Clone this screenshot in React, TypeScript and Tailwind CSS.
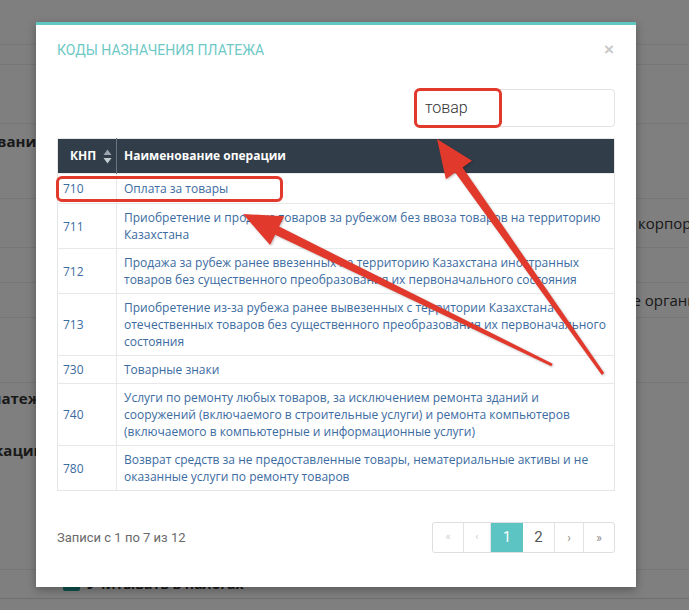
import React from "react";

type Row = { code: string; lines: string[] };

const rows: Row[] = [
  { code: "710", lines: ["Оплата за товары"] },
  {
    code: "711",
    lines: [
      "Приобретение и продажа товаров за рубежом без ввоза товаров на территорию",
      "Казахстана",
    ],
  },
  {
    code: "712",
    lines: [
      "Продажа за рубеж ранее ввезенных на территорию Казахстана иностранных",
      "товаров без существенного преобразования их первоначального состояния",
    ],
  },
  {
    code: "713",
    lines: [
      "Приобретение из-за рубежа ранее вывезенных с территории Казахстана",
      "отечественных товаров без существенного преобразования их первоначального",
      "состояния",
    ],
  },
  { code: "730", lines: ["Товарные знаки"] },
  {
    code: "740",
    lines: [
      "Услуги по ремонту любых товаров, за исключением ремонта зданий и",
      "сооружений (включаемого в строительные услуги) и ремонта компьютеров",
      "(включаемого в компьютерные и информационные услуги)",
    ],
  },
  {
    code: "780",
    lines: [
      "Возврат средств за не предоставленные товары, нематериальные активы и не",
      "оказанные услуги по ремонту товаров",
    ],
  },
];

// arrow polygon from tail to tip, tapering shaft + head
function arrowPoints(
  tail: [number, number],
  tip: [number, number],
  tailW: number,
  shaftW: number,
  headW: number,
  headLen: number
) {
  const dx = tip[0] - tail[0];
  const dy = tip[1] - tail[1];
  const len = Math.hypot(dx, dy);
  const ux = dx / len;
  const uy = dy / len;
  const nx = -uy;
  const ny = ux;
  const bx = tip[0] - ux * headLen;
  const by = tip[1] - uy * headLen;
  const p = (x: number, y: number) => `${x.toFixed(1)},${y.toFixed(1)}`;
  return [
    p(tail[0] + (nx * tailW) / 2, tail[1] + (ny * tailW) / 2),
    p(bx + (nx * shaftW) / 2, by + (ny * shaftW) / 2),
    p(bx + (nx * headW) / 2, by + (ny * headW) / 2),
    p(tip[0], tip[1]),
    p(bx - (nx * headW) / 2, by - (ny * headW) / 2),
    p(bx - (nx * shaftW) / 2, by - (ny * shaftW) / 2),
    p(tail[0] - (nx * tailW) / 2, tail[1] - (ny * tailW) / 2),
  ].join(" ");
}

function SortIcon() {
  return (
    <svg width="9" height="15" viewBox="0 0 9 15" className="ml-[7px]">
      <path d="M4.5 0.5 L8.5 6 L0.5 6 Z" fill="#9aa5b0" />
      <path d="M4.5 14.5 L8.5 9 L0.5 9 Z" fill="#c3cbd3" />
    </svg>
  );
}

function PageBehind() {
  return (
    <div className="flex flex-col font-['Open_Sans',sans-serif] text-[15px] text-[#333]">
      <div className="h-[45px] border-b border-[#eee]" />
      <div className="h-[20px] border-b border-[#eee]" />
      <div className="h-[59px] border-b border-[#eee]" />
      <div className="flex h-[35px] items-center">
        <span className="ml-[-75px] whitespace-nowrap font-bold">Наименование</span>
      </div>
      <div className="h-[40px] border-b border-[#eee]" />
      <div className="flex h-[49px] items-center border-b border-[#eee] pl-[638px]">
        <span className="whitespace-nowrap">корпоративный</span>
      </div>
      <div className="h-[35px] border-b border-[#eee]" />
      <div className="flex h-[35px] items-center border-b border-[#eee] pl-[621px]">
        <span className="whitespace-nowrap">ые организации</span>
      </div>
      <div className="h-[65px] border-b border-[#eee]" />
      <div className="flex h-[30px] items-center">
        <span className="ml-[-118px] whitespace-nowrap font-bold">Назначение платежа</span>
      </div>
      <div className="h-[22px]" />
      <div className="flex h-[30px] items-center">
        <span className="ml-[-84px] whitespace-nowrap font-bold">Классификации</span>
      </div>
      <div className="h-[105px] border-b border-[#eee]" />
      <div className="flex h-[26px] items-center gap-[7px] pl-[63px]">
        <span className="h-[16px] w-[17px] rounded-[2px] bg-[#1fa39b]" />
        <span className="whitespace-nowrap text-[14px] font-bold">Учитывать в налогах</span>
      </div>
      <div className="h-[3px] border-b border-[#ddd]" />
    </div>
  );
}

export default function App() {
  return (
    <div className="relative h-[610px] w-[689px] overflow-hidden bg-white">
      <PageBehind />
      <div className="absolute inset-0 bg-black/50" />

      {/* modal */}
      <div className="absolute inset-0 pl-[36px] pt-[22px]">
        <div className="h-[565px] w-[600px] border-t-[3px] border-[#5fc8c5] bg-white shadow-[0_3px_9px_rgba(0,0,0,0.3)]">
          <div className="flex items-center justify-between pl-[21px] pr-[22px] pt-[15px]">
            <h4 className="font-['Roboto',sans-serif] text-[14px] leading-[20px] text-[#6ec9c6]">
              КОДЫ НАЗНАЧЕНИЯ ПЛАТЕЖА
            </h4>
            <span className="font-['Liberation_Sans',sans-serif] text-[17px] font-bold leading-[20px] text-[#c8c8c8]">
              ×
            </span>
          </div>

          <div className="px-[21px]">
            <div className="mt-[29px] flex justify-end">
              <div className="relative flex h-[38px] w-[201px] items-center rounded-[4px] border border-[#e3e3e3] pl-[10px] font-['Roboto',sans-serif] text-[16px] font-light text-[#333]">
                товар
                <div className="absolute left-[-1px] top-[-2px] h-[40px] w-[88px] rounded-[6px] border-[3px] border-[#e2392d]" />
              </div>
            </div>

            <div className="relative mt-[11px] font-['Open_Sans',sans-serif] text-[12px]">
              <table className="w-[558px] border-collapse border border-[#e6e6e6]">
                <thead>
                  <tr className="h-[35px] bg-[#313d49] text-left text-white">
                    <th className="w-[59px] border-r border-[#6b7580] pl-[12px] font-bold">
                      <div className="flex items-center">
                        КНП
                        <SortIcon />
                      </div>
                    </th>
                    <th className="pl-[7px] font-bold">Наименование операции</th>
                  </tr>
                </thead>
                <tbody>
                  {rows.map((r, i) => (
                    <tr key={r.code} className="border-t border-[#e8e8e8] text-[#3b6ba1]">
                      <td className="border-r border-[#e8e8e8] pl-[5px] align-middle leading-[17px]">
                        {r.code}
                      </td>
                      <td
                        className={
                          i === 0
                            ? "py-[6px] pl-[7px] leading-[17px]"
                            : "py-[5px] pl-[7px] leading-[17px]"
                        }
                      >
                        {r.lines.map((l) => (
                          <span key={l} className="block whitespace-nowrap">
                            {l}
                          </span>
                        ))}
                      </td>
                    </tr>
                  ))}
                </tbody>
              </table>
              <div className="absolute left-[-1px] top-[38px] h-[26px] w-[227px] rounded-[6px] border-[3px] border-[#e2392d]" />
            </div>

            <div className="mt-[31px] flex items-center justify-between">
              <span className="font-['Roboto',sans-serif] text-[13px] text-[#6a6a6a]">
                Записи с 1 по 7 из 12
              </span>
              <div className="flex h-[31px] overflow-hidden rounded-[3px] border border-[#dedede] font-['Roboto',sans-serif]">
                <span className="flex w-[31px] items-center justify-center border-r border-[#e3e3e3] text-[11px] text-[#cfcfcf]">«</span>
                <span className="flex w-[27px] items-center justify-center border-r border-[#e3e3e3] text-[11px] text-[#cfcfcf]">‹</span>
                <span className="flex w-[32px] items-center justify-center bg-[#5cc5c3] text-[14px] text-white">1</span>
                <span className="flex w-[32px] items-center justify-center border-r border-[#e3e3e3] text-[15px] text-[#555]">2</span>
                <span className="flex w-[29px] items-center justify-center border-r border-[#e3e3e3] text-[12px] text-[#888]">›</span>
                <span className="flex w-[30px] items-center justify-center text-[12px] text-[#888]">»</span>
              </div>
            </div>
          </div>
        </div>
      </div>

      {/* annotation arrows */}
      <svg className="pointer-events-none absolute inset-0" width="689" height="610" viewBox="0 0 689 610">
        <g fill="#e2392d" style={{ filter: "drop-shadow(1px 1px 1px rgba(0,0,0,0.25))" }}>
          <polygon points={arrowPoints([552, 365], [243, 214], 3, 9, 32, 38)} />
          <polygon points={arrowPoints([603, 374], [437, 139], 3, 9, 32, 38)} />
        </g>
      </svg>
    </div>
  );
}
